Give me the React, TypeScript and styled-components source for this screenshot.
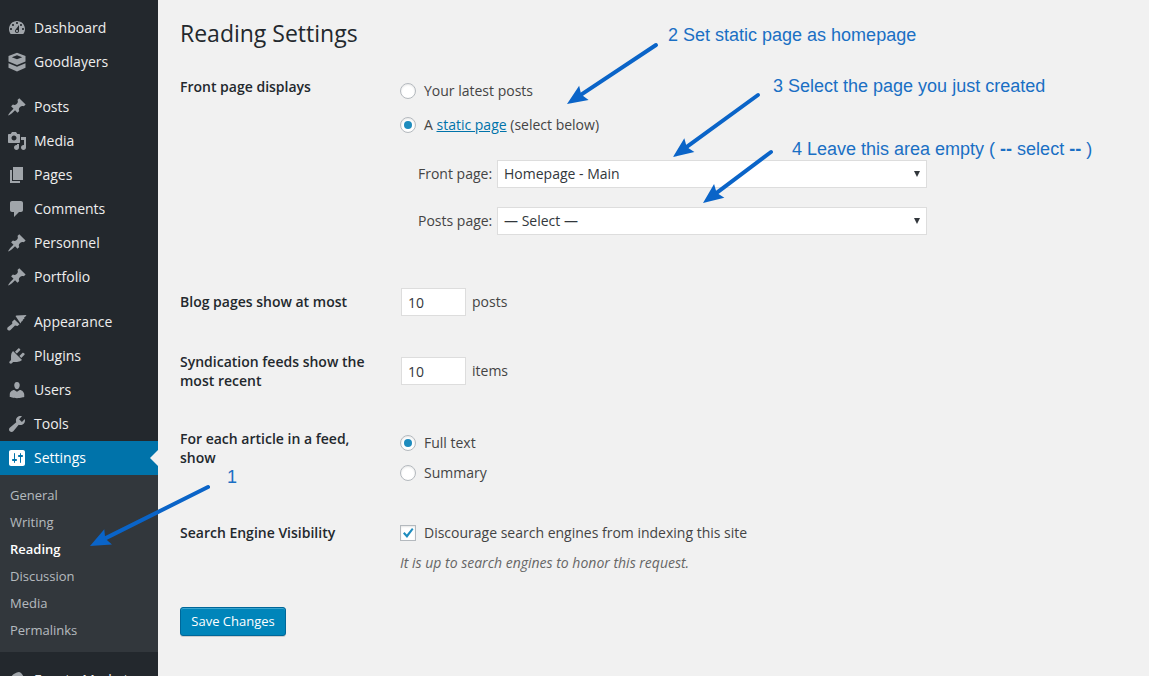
import React from 'react'
import styled, { createGlobalStyle } from 'styled-components'

const GlobalStyle = createGlobalStyle`
  html, body {
    margin: 0;
    padding: 0;
    height: 100%;
    overflow: hidden;
    background: #f1f1f1;
  }
  * {
    box-sizing: border-box;
  }
`

const icons: Record<string, React.ReactNode> = {
  dashboard: (
    <path d="M3.760 16h12.480c1.100-1.370 1.760-3.110 1.760-5 0-4.420-3.580-8-8-8s-8 3.580-8 8c0 1.890.66 3.630 1.760 5zM10 4c.55 0 1 .45 1 1s-.45 1-1 1-1-.45-1-1 .45-1 1-1zM6 6c.55 0 1 .45 1 1s-.45 1-1 1-1-.45-1-1 .45-1 1-1zm8 0c.55 0 1 .45 1 1s-.45 1-1 1-1-.45-1-1 .45-1 1-1zm-5.370 5.550L12 7v6c0 1.100-.9 2-2 2s-2-.9-2-2c0-.57.24-1.080.63-1.450zM4 10c.55 0 1 .45 1 1s-.45 1-1 1-1-.45-1-1 .45-1 1-1zm12 0c.55 0 1 .45 1 1s-.45 1-1 1-1-.45-1-1 .45-1 1-1zm-5 3c0-.55-.45-1-1-1s-1 .45-1 1 .45 1 1 1 1-.45 1-1z" />
  ),
  layers: (
    <>
      <path d="M10 .8 1.500 4v5.500L10 13l8.500-3.500V4L10 .8zM10 3.200l5.200 2L10 7.300l-5.200-2.100 5.200-2z" fillRule="evenodd" />
      <path d="M1.500 11.300v4.500L10 19.400l8.500-3.600v-4.500L10 14.800l-8.500-3.500z" />
    </>
  ),
  pin: (
    <path d="M10.440 3.020l1.820-1.820 6.360 6.350-1.830 1.820c-1.050-.68-2.480-.57-3.410.36l-.75.75c-.92.93-1.040 2.350-.35 3.410l-1.830 1.820-2.410-2.410-2.800 2.790c-.42.420-3.380 2.710-3.800 2.290s1.860-3.390 2.280-3.810l2.790-2.790L4.100 9.360l1.830-1.820c1.050.69 2.480.57 3.400-.36l.75-.75c.93-.92 1.050-2.350.36-3.410z" />
  ),
  media: (
    <path d="M13 11V4c0-.55-.45-1-1-1h-1.670L9 1H5L3.670 3H2c-.55 0-1 .45-1 1v7c0 .55.45 1 1 1h10c.55 0 1-.45 1-1zM7 4.500c1.380 0 2.500 1.120 2.500 2.500S8.380 9.500 7 9.500 4.500 8.380 4.500 7 5.620 4.500 7 4.500zM14 6h5v10.500c0 1.380-1.120 2.500-2.500 2.500S14 17.880 14 16.500s1.120-2.500 2.500-2.500c.17 0 .34.020.5.050V9h-3V6zm-4 8.050V13h2v3.500c0 1.380-1.120 2.500-2.500 2.500S7 17.880 7 16.500 8.120 14 9.500 14c.17 0 .34.020.5.050z" />
  ),
  pages: <path d="M6 15V2h10v13H6zm-1 1h8v2H3V5h2v11z" />,
  comments: <path d="M5 2h9c1.100 0 2 .9 2 2v7c0 1.100-.9 2-2 2h-2l-5 5v-5H5c-1.100 0-2-.9-2-2V4c0-1.100.9-2 2-2z" />,
  brush: (
    <>
      <path d="M9.500 3.500 19.500 3l-1.500 2-1 .5.500 1-1.500 1-.5 1.500-1 .5-1 2-5-7.500z" />
      <path d="M7.500 7.500l5 4.800-2 1.700-2.500-.5-4.500 4.500c-1 .8-2.500.7-3-.3-.5-.8-.3-1.800.3-2.500l4.500-3.500-.2-2 2.400-2.200z" />
    </>
  ),
  plug: (
    <path d="M13.110 4.360L9.870 7.600 8 5.730l3.240-3.240c.35-.34 1.050-.2 1.560.32.52.51.66 1.210.31 1.550zm-8 1.770l.91-1.120 9.010 9.010-1.190.84c-.71.71-2.630 1.160-3.820 1.160H6.140L4.900 17.260c-.59.59-1.540.59-2.120 0-.59-.58-.59-1.530 0-2.120l1.240-1.240v-3.880c0-1.130.4-3.190 1.090-3.890zm7.260 3.970l3.240-3.240c.34-.35 1.040-.21 1.550.31.52.51.66 1.210.31 1.550l-3.240 3.250z" />
  ),
  user: (
    <path d="M10 9.250c-2.270 0-2.730-3.440-2.730-3.440C7 4.020 7.820 2 9.970 2c2.160 0 2.980 2.020 2.710 3.810 0 0-.41 3.440-2.680 3.440zm0 2.570L12.720 10c2.390 0 4.520 2.330 4.520 4.530v2.490s-3.650 1.130-7.240 1.130c-3.650 0-7.240-1.130-7.240-1.130v-2.490c0-2.250 1.940-4.480 4.470-4.480z" />
  ),
  wrench: (
    <path d="M16.680 9.770c-1.340 1.340-3.300 1.670-4.950.99l-5.410 6.520c-.99.99-2.590.99-3.570 0-.99-.98-.99-2.580 0-3.570l6.520-5.420c-.68-1.650-.35-3.610.99-4.950 1.280-1.280 3.120-1.620 4.720-1.060l-2.890 2.890 2.820 2.820 2.860-2.880c.55 1.610.21 3.440-1.090 4.660z" />
  ),
  sliders: (
    <path d="M18 16V4c0-1.100-.9-2-2-2H4c-1.100 0-2 .9-2 2v12c0 1.100.9 2 2 2h12c1.100 0 2-.9 2-2zM8 11h1c.55 0 1 .45 1 1s-.45 1-1 1H8v1.500c0 .28-.22.5-.5.5s-.5-.22-.5-.5V13H6c-.55 0-1-.45-1-1s.45-1 1-1h1V5.500c0-.28.22-.5.5-.5s.5.22.5.5V11zm5-2h-1c-.55 0-1-.45-1-1s.45-1 1-1h1V5.500c0-.28.22-.5.5-.5s.5.22.5.5V7h1c.55 0 1 .45 1 1s-.45 1-1 1h-1v5.500c0 .28-.22.5-.5.5s-.5-.22-.5-.5V9z" fillRule="evenodd" />
  ),
  drop: <path d="M12 2c3 1 5 4 5 8 0 5-3 8-7 8s-7-3-7-7c0-5 4-8 9-9z" />,
}

const MenuIcon = ({ name }: { name: string }) => (
  <IconSvg viewBox="0 0 20 20" aria-hidden="true">
    {icons[name]}
  </IconSvg>
)

const topMenu = [
  { label: 'Dashboard', icon: 'dashboard' },
  { label: 'Goodlayers', icon: 'layers' },
]
const contentMenu = [
  { label: 'Posts', icon: 'pin' },
  { label: 'Media', icon: 'media' },
  { label: 'Pages', icon: 'pages' },
  { label: 'Comments', icon: 'comments' },
  { label: 'Personnel', icon: 'pin' },
  { label: 'Portfolio', icon: 'pin' },
]
const adminMenu = [
  { label: 'Appearance', icon: 'brush' },
  { label: 'Plugins', icon: 'plug' },
  { label: 'Users', icon: 'user' },
  { label: 'Tools', icon: 'wrench' },
]
const subMenu = ['General', 'Writing', 'Reading', 'Discussion', 'Media', 'Permalinks']

const MenuGroup = ({ items }: { items: { label: string; icon: string }[] }) => (
  <Group>
    {items.map((item) => (
      <MenuItem key={item.label}>
        <MenuIcon name={item.icon} />
        {item.label}
      </MenuItem>
    ))}
  </Group>
)

const Arrow = ({ x1, y1, x2, y2 }: { x1: number; y1: number; x2: number; y2: number }) => {
  const angle = Math.atan2(y2 - y1, x2 - x1)
  const len = 22
  const spread = 0.4
  const p1 = [x2 - len * Math.cos(angle - spread), y2 - len * Math.sin(angle - spread)]
  const p2 = [x2 - len * Math.cos(angle + spread), y2 - len * Math.sin(angle + spread)]
  const neckX = x2 - 17 * Math.cos(angle)
  const neckY = y2 - 17 * Math.sin(angle)
  return (
    <>
      <line x1={x1} y1={y1} x2={neckX} y2={neckY} stroke="#0a64c8" strokeWidth="4" strokeLinecap="round" />
      <polygon points={`${x2},${y2} ${p1[0]},${p1[1]} ${neckX},${neckY} ${p2[0]},${p2[1]}`} fill="#0a64c8" />
    </>
  )
}

export default function App() {
  return (
    <>
      <GlobalStyle />
      <Page>
        <Sidebar>
          <MenuGroup items={topMenu} />
          <MenuGroup items={contentMenu} />
          <MenuGroup items={adminMenu} />
          <ActiveItem>
            <MenuIcon name="sliders" />
            Settings
          </ActiveItem>
          <SubMenu>
            {subMenu.map((label) => (
              <SubItem key={label} $current={label === 'Reading'}>
                {label}
              </SubItem>
            ))}
          </SubMenu>
          <Group>
            <MenuItem>
              <MenuIcon name="drop" />
              Envato Market
            </MenuItem>
          </Group>
        </Sidebar>
        <Main>
          <Title>Reading Settings</Title>
          <FormRow $height={215}>
            <RowLabel>Front page displays</RowLabel>
            <RowBody $top={13}>
              <Option $gap={15}>
                <Radio />
                Your latest posts
              </Option>
              <Option $gap={26}>
                <Radio $checked />
                <span>
                  A <PageLink>static page</PageLink> (select below)
                </span>
              </Option>
              <SelectRow>
                <SelectLabel>Front page:</SelectLabel>
                <SelectBox>Homepage - Main</SelectBox>
              </SelectRow>
              <SelectRow>
                <SelectLabel>Posts page:</SelectLabel>
                <SelectBox>— Select —</SelectBox>
              </SelectRow>
            </RowBody>
          </FormRow>
          <FormRow $height={60}>
            <RowLabel>Blog pages show at most</RowLabel>
            <RowBody $top={5}>
              <NumberLine>
                <NumberBox>10</NumberBox>
                <Unit>posts</Unit>
              </NumberLine>
            </RowBody>
          </FormRow>
          <FormRow $height={77}>
            <RowLabel>Syndication feeds show the most recent</RowLabel>
            <RowBody $top={14}>
              <NumberLine>
                <NumberBox>10</NumberBox>
                <Unit>items</Unit>
              </NumberLine>
            </RowBody>
          </FormRow>
          <FormRow $height={94}>
            <RowLabel>For each article in a feed, show</RowLabel>
            <RowBody $top={13}>
              <Option $gap={11}>
                <Radio $checked />
                Full text
              </Option>
              <Option $gap={0}>
                <Radio />
                Summary
              </Option>
            </RowBody>
          </FormRow>
          <FormRow $height={93}>
            <RowLabel>Search Engine Visibility</RowLabel>
            <RowBody $top={9}>
              <Option $gap={11}>
                <CheckBox>
                  <svg viewBox="0 0 16 16" width="16" height="16">
                    <path d="M3 8.500 4.500 7l2.300 2.500L12 3l1.500 1.200L7 13z" fill="#1e8cbe" />
                  </svg>
                </CheckBox>
                Discourage search engines from indexing this site
              </Option>
              <Hint>It is up to search engines to honor this request.</Hint>
            </RowBody>
          </FormRow>
          <SaveButton>Save Changes</SaveButton>
        </Main>
        <Overlay viewBox="0 0 1149 676" aria-hidden="true">
          <Arrow x1={656} y1={45} x2={567} y2={104} />
          <Arrow x1={758} y1={95} x2={673} y2={157} />
          <Arrow x1={771} y1={152} x2={703} y2={203} />
          <Arrow x1={208} y1={487} x2={90} y2={546} />
        </Overlay>
        <Note $x={668} $y={24}>2 Set static page as homepage</Note>
        <Note $x={773} $y={75}>3 Select the page you just created</Note>
        <Note $x={792} $y={138}>4 Leave this area empty ( <strong>--</strong> select <strong>--</strong> )</Note>
        <Note $x={227} $y={466}>1</Note>
      </Page>
    </>
  )
}

const Page = styled.div`
  position: relative;
  display: flex;
  width: 1149px;
  height: 676px;
  overflow: hidden;
  background: #f1f1f1;
  color: #444;
  font-family: "Open Sans", sans-serif;
  font-size: 14px;
`
const Sidebar = styled.nav`
  width: 158px;
  flex-shrink: 0;
  padding-top: 11px;
  background: #23282d;
`
const Group = styled.div`
  margin-bottom: 11px;
`
const MenuItem = styled.div`
  display: flex;
  align-items: center;
  gap: 7px;
  height: 34px;
  padding: 0 0 2px 7px;
  color: #eee;
  font-size: 14px;
  svg {
    margin-top: 2px;
  }
`
const ActiveItem = styled(MenuItem)`
  position: relative;
  margin-top: -11px;
  background: #0073aa;
  color: #fff;
  svg {
    fill: #fff;
  }
  &::after {
    content: "";
    position: absolute;
    right: 0;
    top: 9px;
    border: 8px solid transparent;
    border-right-color: #f1f1f1;
  }
`
const IconSvg = styled.svg`
  width: 20px;
  height: 20px;
  flex-shrink: 0;
  fill: #a0a5aa;
`
const SubMenu = styled.div`
  display: flex;
  flex-direction: column;
  height: 177px;
  padding-top: 7px;
  margin-bottom: 11px;
  background: #32373c;
`
const SubItem = styled.div<{ $current?: boolean }>`
  display: flex;
  align-items: center;
  height: 27px;
  padding: 0 0 2px 10px;
  font-size: 13px;
  font-weight: ${(p) => (p.$current ? 600 : 400)};
  color: ${(p) => (p.$current ? '#fff' : 'rgba(240, 245, 250, 0.7)')};
`
const Main = styled.main`
  flex: 1;
  padding: 0 0 0 22px;
`
const Title = styled.h1`
  margin: 0;
  padding-top: 19px;
  height: 68px;
  font-size: 23px;
  font-weight: 400;
  line-height: 29px;
  color: #23282d;
`
const FormRow = styled.div<{ $height: number }>`
  display: flex;
  height: ${(p) => p.$height}px;
`
const RowLabel = styled.div`
  width: 220px;
  padding-right: 30px;
  padding-top: 9px;
  font-weight: 600;
  line-height: 19px;
  color: #23282d;
`
const RowBody = styled.div<{ $top: number }>`
  display: flex;
  flex-direction: column;
  padding-top: ${(p) => p.$top}px;
`
const Option = styled.div<{ $gap: number }>`
  display: flex;
  align-items: center;
  gap: 8px;
  height: 19px;
  margin-bottom: ${(p) => p.$gap}px;
  line-height: 19px;
`
const Radio = styled.span<{ $checked?: boolean }>`
  position: relative;
  width: 16px;
  height: 16px;
  border: 1px solid #b4b9be;
  border-radius: 50%;
  background: #fff;
  box-shadow: inset 0 1px 2px rgba(0, 0, 0, 0.1);
  &::before {
    content: "";
    display: ${(p) => (p.$checked ? 'block' : 'none')};
    position: absolute;
    left: 3px;
    top: 3px;
    width: 8px;
    height: 8px;
    border-radius: 50%;
    background: #1e8cbe;
  }
`
const CheckBox = styled.span`
  width: 16px;
  height: 16px;
  border: 1px solid #b4b9be;
  background: #fff;
  box-shadow: inset 0 1px 2px rgba(0, 0, 0, 0.1);
  svg {
    display: block;
    margin: -1px;
  }
`
const PageLink = styled.a`
  color: #0073aa;
  text-decoration: underline;
`
const SelectRow = styled.div`
  display: flex;
  align-items: center;
  gap: 5px;
  margin-bottom: 19px;
  padding-left: 18px;
`
const SelectLabel = styled.span`
  width: 74px;
  padding-bottom: 2px;
  white-space: nowrap;
`
const SelectBox = styled.div`
  position: relative;
  display: flex;
  align-items: center;
  width: 430px;
  height: 28px;
  padding: 0 0 2px 6px;
  border: 1px solid #ddd;
  background: #fff;
  color: #32373c;
  &::after {
    content: "";
    position: absolute;
    right: 6px;
    top: 10px;
    border: 3.500px solid transparent;
    border-top: 6px solid #32373c;
    border-bottom: 0;
  }
`
const NumberLine = styled.div`
  display: flex;
  align-items: center;
  gap: 6px;
  margin-left: 1px;
`
const NumberBox = styled.div`
  display: flex;
  align-items: center;
  width: 65px;
  height: 28px;
  padding-left: 6px;
  border: 1px solid #ddd;
  background: #fff;
  color: #32373c;
`
const Unit = styled.span`
  padding-bottom: 2px;
`
const Hint = styled.p`
  margin: 0;
  font-size: 14px;
  line-height: 19px;
  font-style: italic;
  color: #666;
`
const SaveButton = styled.button`
  display: block;
  width: 106px;
  height: 29px;
  padding: 0 0 2px;
  border: 1px solid #006799;
  border-radius: 3px;
  background: #0085ba;
  box-shadow: inset 0 1px 0 rgba(120, 200, 230, 0.5), 0 1px 0 rgba(0, 0, 0, 0.15);
  color: #fff;
  font-family: inherit;
  font-size: 13px;
`
const Overlay = styled.svg`
  position: absolute;
  inset: 0;
  width: 1149px;
  height: 676px;
  pointer-events: none;
`
const Note = styled.div<{ $x: number; $y: number }>`
  position: absolute;
  left: ${(p) => p.$x}px;
  top: ${(p) => p.$y}px;
  color: #1a6fc4;
  font-family: "Liberation Sans", Arial, sans-serif;
  font-size: 18px;
  line-height: 22px;
  white-space: nowrap;
  strong {
    font-weight: 700;
  }
`
